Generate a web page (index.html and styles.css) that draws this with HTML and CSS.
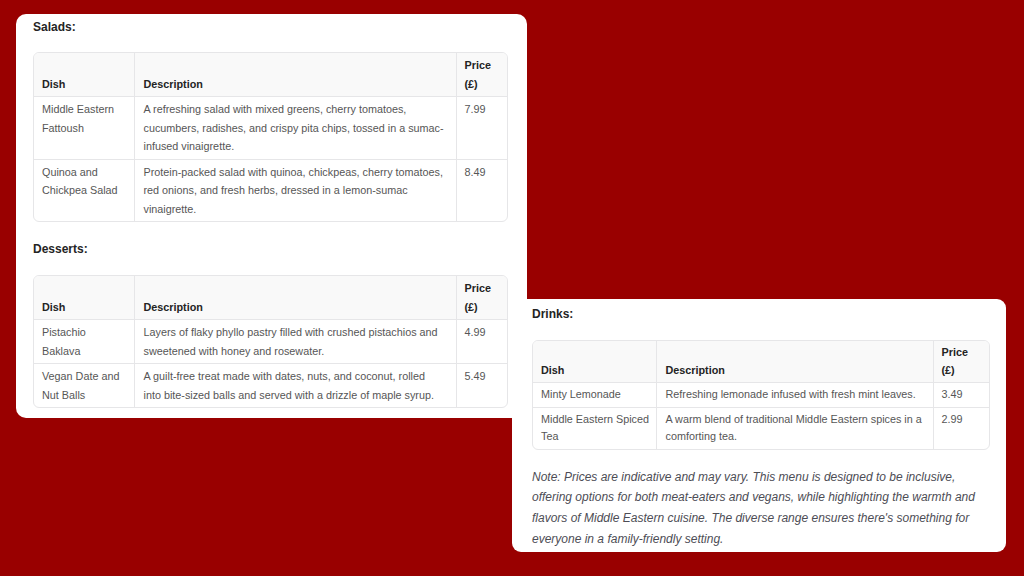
FILE: index.html
```html
<!DOCTYPE html>
<html lang="en">
<head>
<meta charset="utf-8">
<title>Menu</title>
<link rel="stylesheet" href="styles.css">
</head>
<body>
<main class="desk">
  <section class="card card-main">
    <h3 class="section-title">Salads:</h3>
    <div class="table-wrap">
      <table class="menu-table">
        <colgroup><col class="c-dish"><col class="c-desc"><col class="c-price"></colgroup>
        <thead><tr><th>Dish</th><th>Description</th><th>Price<br>(£)</th></tr></thead>
        <tbody>
          <tr><td>Middle Eastern<br>Fattoush</td><td>A refreshing salad with mixed greens, cherry tomatoes,<br>cucumbers, radishes, and crispy pita chips, tossed in a sumac-<br>infused vinaigrette.</td><td>7.99</td></tr>
          <tr><td>Quinoa and<br>Chickpea Salad</td><td>Protein-packed salad with quinoa, chickpeas, cherry tomatoes,<br>red onions, and fresh herbs, dressed in a lemon-sumac<br>vinaigrette.</td><td>8.49</td></tr>
        </tbody>
      </table>
    </div>
    <h3 class="section-title gap-top">Desserts:</h3>
    <div class="table-wrap">
      <table class="menu-table">
        <colgroup><col class="c-dish"><col class="c-desc"><col class="c-price"></colgroup>
        <thead><tr><th>Dish</th><th>Description</th><th>Price<br>(£)</th></tr></thead>
        <tbody>
          <tr><td>Pistachio<br>Baklava</td><td>Layers of flaky phyllo pastry filled with crushed pistachios and<br>sweetened with honey and rosewater.</td><td>4.99</td></tr>
          <tr><td>Vegan Date and<br>Nut Balls</td><td>A guilt-free treat made with dates, nuts, and coconut, rolled<br>into bite-sized balls and served with a drizzle of maple syrup.</td><td>5.49</td></tr>
        </tbody>
      </table>
    </div>
  </section>

  <section class="card card-drinks">
    <h3 class="section-title">Drinks:</h3>
    <div class="table-wrap">
      <table class="menu-table drinks">
        <colgroup><col class="d-dish"><col class="d-desc"><col class="d-price"></colgroup>
        <thead><tr><th>Dish</th><th>Description</th><th>Price<br>(£)</th></tr></thead>
        <tbody>
          <tr><td>Minty Lemonade</td><td>Refreshing lemonade infused with fresh mint leaves.</td><td>3.49</td></tr>
          <tr><td>Middle Eastern Spiced<br>Tea</td><td>A warm blend of traditional Middle Eastern spices in a<br>comforting tea.</td><td>2.99</td></tr>
        </tbody>
      </table>
    </div>
    <p class="note">Note: Prices are indicative and may vary. This menu is designed to be inclusive,<br>offering options for both meat-eaters and vegans, while highlighting the warmth and<br>flavors of Middle Eastern cuisine. The diverse range ensures there's something for<br>everyone in a family-friendly setting.</p>
  </section>
</main>
</body>
</html>
```

FILE: styles.css
```css
* { box-sizing: border-box; }
html, body { margin: 0; padding: 0; }
body {
  width: 1024px;
  height: 576px;
  overflow: hidden;
  background: #990000;
  font-family: "Liberation Sans", "Inter", sans-serif;
  color: #424242;
}
.desk {
  position: relative;
  width: 1024px;
  height: 576px;
}
.card {
  position: absolute;
  background: #ffffff;
  border-radius: 10px;
}
.card-main {
  left: 16px;
  top: 14px;
  width: 511px;
  height: 404px;
  padding: 3px 19px 0 17px;
}
.card-drinks {
  left: 512px;
  top: 299px;
  width: 494px;
  height: 253px;
  padding: 5px 16px 0 20px;
  border-radius: 9px;
}
.section-title {
  margin: 0;
  font-size: 12px;
  line-height: 20px;
  font-weight: 700;
  color: #242424;
}
.card-main .section-title { margin-bottom: 15px; }
.card-main .section-title.gap-top { margin-top: 17px; margin-bottom: 16px; }
.card-drinks .section-title { margin-bottom: 16px; }
.table-wrap {
  border: 1px solid #e6e6e8;
  border-radius: 6px;
  overflow: hidden;
}
.menu-table {
  width: 100%;
  border-collapse: collapse;
  table-layout: fixed;
  font-size: 10.8px;
  line-height: 18.5px;
}
.c-dish { width: 100px; }
.c-price { width: 51px; }
.d-dish { width: 123px; }
.d-price { width: 56px; }
.menu-table th,
.menu-table td {
  text-align: left;
  padding: 3px 8px 3px 8px;
  border-right: 1px solid #e6e6e8;
  border-bottom: 1px solid #e6e6e8;
  white-space: nowrap;
}
.menu-table th:nth-child(2),
.menu-table td:nth-child(2) { padding-left: 9px; }
.menu-table th:last-child,
.menu-table td:last-child { border-right: none; }
.menu-table tbody tr:last-child td { border-bottom: none; }
.menu-table th {
  vertical-align: bottom;
  background: #f9f9f9;
  font-weight: 700;
  color: #242424;
}
.menu-table td {
  vertical-align: top;
  color: #565656;
}
.menu-table.drinks { line-height: 17.5px; }
.note {
  margin: 17px 0 0;
  font-size: 12px;
  line-height: 20.7px;
  font-style: italic;
  color: #4d4d55;
}
```
